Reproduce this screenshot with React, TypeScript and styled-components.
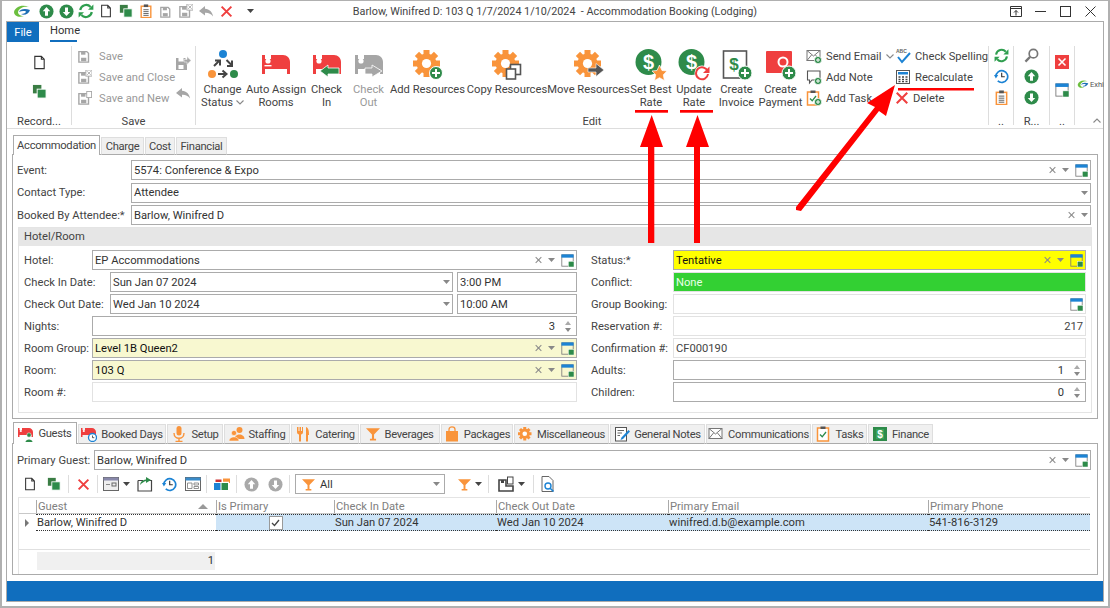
import React from 'react';
import styled, {createGlobalStyle} from 'styled-components';

const Global = createGlobalStyle`
    html, body { margin: 0; padding: 0; background: #fff; }
    body {
        font-family: Roboto, "Noto Sans", sans-serif;
        font-size: 11.2px;
        color: #444;
        overflow: hidden;
    }
    * { box-sizing: border-box; }
`;

const GREEN = '#2e8b4a';
const ORANGE = '#f9943b';
const RED = '#ef3f3f';
const BLUE = '#1c83d4';
const GRAY = '#a6a6a6';

/* ---------- icons ---------- */

type IconProps = {size?: number; color?: string};

const Svg: React.FC<{size?: number; box?: number; children: React.ReactNode}> = ({size = 16, box = 16, children}) => (
    <svg width={size} height={size} viewBox={`0 0 ${box} ${box}`} style={{display: 'block', flex: 'none'}}>{children}</svg>
);

const CircleArrow: React.FC<IconProps & {down?: boolean}> = ({size = 15, color = GREEN, down}) => (
    <Svg size={size}>
        <circle cx="8" cy="8" r="7.5" fill={color} />
        <g transform={down ? 'rotate(180 8 8)' : undefined}>
            <path d="M8 3.2 L12 7.6 H9.6 V12.4 H6.4 V7.6 H4 Z" fill="#fff" />
        </g>
    </Svg>
);

const Refresh: React.FC<IconProps> = ({size = 16, color = '#2f9e4f'}) => (
    <Svg size={size}>
        <path d="M2.2 7 A6 6 0 0 1 12.6 4" fill="none" stroke={color} strokeWidth="2.2" />
        <path d="M15.4 1.4 V6.8 H10 Z" fill={color} />
        <path d="M13.8 9 A6 6 0 0 1 3.4 12" fill="none" stroke={color} strokeWidth="2.2" />
        <path d="M.6 14.6 V9.2 H6 Z" fill={color} />
    </Svg>
);

const NewDoc: React.FC<IconProps> = ({size = 14}) => (
    <Svg size={size}>
        <path d="M3 1.5 H10 L13 4.5 V14.5 H3 Z M10 1.5 V4.5 H13" fill="#fff" stroke="#333" strokeWidth="1.2" />
    </Svg>
);

const CopyGreen: React.FC<IconProps> = ({size = 14}) => (
    <Svg size={size}>
        <rect x="1" y="1" width="9" height="9" fill="#3a7d44" />
        <rect x="5.5" y="5.5" width="9.5" height="9.5" fill={GREEN} stroke="#fff" strokeWidth="1" />
    </Svg>
);

const Clipboard: React.FC<IconProps> = ({size = 16, color = ORANGE}) => (
    <Svg size={size}>
        <rect x="2.5" y="2.5" width="11" height="13" fill="#fff" stroke={color} strokeWidth="1.6" />
        <rect x="5.5" y=".5" width="5" height="3" fill="#555" />
        <path d="M5 6.5 H11 M5 8.7 H11 M5 10.9 H11 M5 13 H11" stroke="#555" strokeWidth="1" />
    </Svg>
);

const Save: React.FC<IconProps & {extra?: 'x' | 'new'}> = ({size = 14, color = GRAY, extra}) => (
    <Svg size={size}>
        <path d="M1 3 H10 L12 5 V15 H1 Z" fill="none" stroke={color} strokeWidth="1.6" />
        <rect x="3.5" y="3" width="5" height="3.5" fill={color} />
        <rect x="3.5" y="10" width="6" height="4" fill={color} />
        {extra === 'x' && <g><rect x="9" y="0" width="7" height="7" fill="#fff" stroke={color} /><path d="M10.5 1.5 L14.5 5.5 M14.5 1.5 L10.5 5.5" stroke={color} /></g>}
        {extra === 'new' && <rect x="10" y=".5" width="5.5" height="7" fill="#fff" stroke={color} />}
    </Svg>
);

const SaveArrow = () => (
    <Svg>
        <path d="M1 3 H10 L12 5 V15 H1 Z" fill={GRAY} />
        <rect x="3.5" y="3" width="5" height="3.5" fill="#fff" />
        <rect x="3.5" y="10" width="5" height="4" fill="#fff" />
        <path d="M9 4.5 H12 V1.5 L16 5.5 L12 9.5 V7 H9 Z" fill={GRAY} stroke="#fff" strokeWidth=".5" />
    </Svg>
);

const Undo: React.FC<IconProps> = ({size = 16, color = GRAY}) => (
    <Svg size={size}>
        <path d="M7 3 L1 8 L7 12.5 V9.8 C10.5 9.6 13 10.8 15 13.5 C14.5 9 11.5 6.2 7 5.8 Z" fill={color} />
    </Svg>
);

const XMark: React.FC<IconProps> = ({size = 14, color = RED}) => (
    <Svg size={size}>
        <path d="M2 2 L14 14 M14 2 L2 14" stroke={color} strokeWidth="2.4" />
    </Svg>
);

const Bed: React.FC<IconProps> = ({size = 30, color = RED}) => (
    <Svg size={size} box={30}>
        <path d="M1 5 H4 V9 H10 V5 H22 C26 5 29 8 29 12 V24 H26 V19 H4 V24 H1 Z" fill={color} />
        <circle cx="7" cy="11" r="2.6" fill="#fff" />
        <rect x="3.5" y="15" width="7" height="1.4" fill="#fff" />
    </Svg>
);

const BedArrow: React.FC<{color: string; arrow: string; left?: boolean}> = ({color, arrow, left}) => (
    <Svg size={30} box={30}>
        <path d="M1 5 H4 V9 H10 V5 H22 C26 5 29 8 29 12 V24 H26 V19 H4 V24 H1 Z" fill={color} />
        <circle cx="7" cy="11" r="2.6" fill="#fff" />
        <path d={left ? 'M16 15 L8 21 L16 27 V24 H27 V18 H16 Z' : 'M18 15 L28 21 L18 27 V24 H11 V18 H18 Z'} fill={arrow} stroke="#fff" strokeWidth=".8" />
    </Svg>
);

const Gear: React.FC<{size?: number; children?: React.ReactNode}> = ({size = 30, children}) => (
    <Svg size={size} box={30}>
        <g transform="translate(13.5 13.5)">
            {[0, 45, 90, 135, 180, 225, 270, 315].map(a => (
                <rect key={a} x="-3" y="-13.5" width="6" height="6" fill={ORANGE} transform={`rotate(${a})`} />
            ))}
            <circle r="10" fill={ORANGE} />
            <circle r="4.6" fill="#fff" />
        </g>
        {children}
    </Svg>
);

const ChangeStatus = () => (
    <Svg size={32} box={32}>
        <circle cx="16" cy="5" r="4" fill={BLUE} />
        <circle cx="5" cy="25" r="4" fill={ORANGE} />
        <circle cx="27" cy="25" r="4" fill={GREEN} />
        <path d="M7 17 L12.5 11.5 M8 11.5 H13 V16.5" fill="none" stroke="#444" strokeWidth="2" />
        <path d="M19.5 11 L25 16.5 M25 11.5 V17 H20" fill="none" stroke="#444" strokeWidth="2" />
        <path d="M11 25 H18 M15.5 21.5 L19.5 25 L15.5 28.5" fill="none" stroke="#444" strokeWidth="2" />
    </Svg>
);

const Dollar: React.FC<{children?: React.ReactNode}> = ({children}) => (
    <Svg size={32} box={32}>
        <circle cx="13.5" cy="13" r="13" fill={GREEN} />
        <text x="13.5" y="20" textAnchor="middle" fontSize="20" fontWeight="700" fill="#fff" fontFamily="Liberation Sans">$</text>
        {children}
    </Svg>
);

const Invoice = () => (
    <Svg size={32} box={32}>
        <rect x="2.5" y="2" width="23" height="27" fill="#fff" stroke="#555" strokeWidth="1.6" />
        <text x="13" y="21" textAnchor="middle" fontSize="17" fontWeight="700" fill={GREEN} fontFamily="Liberation Sans">$</text>
        <circle cx="24" cy="24" r="7" fill={GREEN} stroke="#fff" />
        <path d="M24 20 V28 M20 24 H28" stroke="#fff" strokeWidth="2" />
    </Svg>
);

const Payment = () => (
    <Svg size={32} box={32}>
        <rect x="1" y="2" width="26" height="22" rx="1" fill={RED} />
        <circle cx="18" cy="13" r="4.5" fill="none" stroke="#fff" strokeWidth="2" />
        <circle cx="24" cy="24" r="7" fill={GREEN} stroke="#fff" />
        <path d="M24 20 V28 M20 24 H28" stroke="#fff" strokeWidth="2" />
    </Svg>
);

const PlusBadge = ({x = 12, y = 12}: {x?: number; y?: number}) => (
    <g>
        <circle cx={x} cy={y} r="3.6" fill={GREEN} stroke="#fff" strokeWidth=".7" />
        <path d={`M${x} ${y - 2} V${y + 2} M${x - 2} ${y} H${x + 2}`} stroke="#fff" strokeWidth="1" />
    </g>
);

const Mail: React.FC<{plus?: boolean; size?: number}> = ({plus, size = 16}) => (
    <Svg size={size}>
        <rect x="1" y="2.5" width="13" height="10" fill="#fff" stroke="#777" />
        <path d="M1 2.5 L7.5 8 L14 2.5 M1 12.5 L5.5 7 M14 12.5 L9.5 7" fill="none" stroke="#777" />
        {plus && <PlusBadge />}
    </Svg>
);

const Note = () => (
    <Svg>
        <path d="M1.5 2 H14 V11 H6 L3.5 14 V11 H1.5 Z" fill="#fff" stroke="#555" strokeWidth="1.1" />
        <PlusBadge />
    </Svg>
);

const TaskIcon: React.FC<{plus?: boolean; size?: number}> = ({plus, size = 16}) => (
    <Svg size={size}>
        <rect x="1.5" y="2" width="11" height="13" fill="#fff" stroke={ORANGE} strokeWidth="1.5" />
        <rect x="4.5" y=".5" width="5" height="2.5" fill="#555" />
        <path d="M4 8.5 L6.2 10.8 L10 6" fill="none" stroke={GREEN} strokeWidth="1.3" />
        {plus && <PlusBadge />}
    </Svg>
);

const Spell = () => (
    <Svg>
        <text x="1" y="5" fontSize="5" fontWeight="700" fill="#666" fontFamily="Liberation Sans">ABC</text>
        <path d="M3 9 L7 14 L15 5" fill="none" stroke={BLUE} strokeWidth="2" />
    </Svg>
);

const Calc = () => (
    <Svg>
        <rect x="1.5" y="1.5" width="13" height="13" fill="#fff" stroke="#555" />
        <rect x="3" y="3" width="10" height="2.5" fill={BLUE} />
        <path d="M3.5 8 H5.5 M7 8 H9 M10.5 8 H12.5 M3.5 10.5 H5.5 M7 10.5 H9 M10.5 10.5 H12.5 M3.5 12.7 H5.5 M7 12.7 H9 M10.5 12.7 H12.5" stroke="#444" strokeWidth="1.3" />
    </Svg>
);

const History: React.FC<IconProps> = ({size = 15}) => (
    <Svg size={size}>
        <path d="M2 8 A6.3 6.3 0 1 1 4 12.7" fill="none" stroke={BLUE} strokeWidth="1.8" />
        <path d="M0 6.5 H4.5 L2 10 Z" fill={BLUE} />
        <path d="M8.2 4 V8.3 H11.5" fill="none" stroke="#333" strokeWidth="1.2" />
    </Svg>
);

const Search: React.FC<IconProps> = ({size = 15}) => (
    <Svg size={size}>
        <circle cx="10" cy="6" r="4.5" fill="#fff" stroke="#777" strokeWidth="1.8" />
        <path d="M6.5 9.5 L1.5 14.5" stroke="#777" strokeWidth="2.4" />
    </Svg>
);

const RedBoxX = () => (
    <Svg size={14}>
        <rect width="16" height="16" fill={RED} />
        <path d="M4 4 L12 12 M12 4 L4 12" stroke="#fff" strokeWidth="1.8" />
    </Svg>
);

const Lookup: React.FC<{size?: number}> = ({size = 13}) => (
    <Svg size={size}>
        <rect x="1" y="1" width="14" height="14" fill="none" stroke="#777" strokeWidth="1" />
        <rect x=".5" y=".5" width="15" height="4" fill={BLUE} />
        <rect x="9" y="9" width="7" height="7" fill={GREEN} stroke="#fff" strokeWidth=".6" />
    </Svg>
);

const Logo: React.FC<{w?: number}> = ({w = 18}) => (
    <svg width={w} height={w * .72} viewBox="0 0 18 13" style={{display: 'block', flex: 'none'}}>
        <path d="M1 7 C2 2 9 -1 16 2 C11 1 6 3 5 7 C5 9 7 11 11 11 C6 13 1 11 1 7 Z" fill="#6cbf3f" />
        <path d="M6 7 C7 4 12 3 17 5 C16 9 11 11 8 9 C11 9 13 8 13 6.5 C11 5.8 8 6 6 7 Z" fill="#1c6fb5" />
    </svg>
);

const Caret: React.FC<{color?: string}> = ({color = '#444'}) => (
    <svg width="7" height="4" viewBox="0 0 7 4" style={{display: 'block', flex: 'none'}}><path d="M0 0 H7 L3.5 4 Z" fill={color} /></svg>
);

const Chevron: React.FC<{up?: boolean}> = ({up}) => (
    <svg width="8" height="5" viewBox="0 0 8 5" style={{display: 'block', flex: 'none'}}>
        <path d={up ? 'M.5 4.5 L4 1 L7.5 4.5' : 'M.5 .5 L4 4 L7.5 .5'} fill="none" stroke="#888" strokeWidth="1.1" />
    </svg>
);

/* small tab and toolbar drawings */
const BedSmall: React.FC<{badge: 'person' | 'clock'}> = ({badge}) => (
    <Svg>
        <path d="M0 2 H1.5 V4 H4 V2 H11 C13 2 15 4 15 6 V11 H13.5 V9 H1.5 V11 H0 Z" fill={RED} />
        <circle cx="2.8" cy="5" r="1.1" fill="#fff" />
        {badge === 'person'
            ? <g><circle cx="11" cy="9" r="2.2" fill={GREEN} stroke="#fff" strokeWidth=".5" /><path d="M7.5 16 C7.5 12.5 14.5 12.5 14.5 16 Z" fill={GREEN} /></g>
            : <g><circle cx="11.5" cy="11.5" r="4" fill="#fff" stroke={BLUE} strokeWidth="1.3" /><path d="M11.5 9.5 V11.7 H13.3" fill="none" stroke="#333" strokeWidth=".8" /></g>}
    </Svg>
);
const Mic = () => (
    <Svg><rect x="5.5" y="0" width="5" height="9.5" rx="2.5" fill={ORANGE} /><path d="M3 7 C3 14 13 14 13 7 M8 12 V15 M4.5 15.5 H11.5" fill="none" stroke={ORANGE} strokeWidth="1.4" /></Svg>
);
const People = () => (
    <Svg>
        <circle cx="10.5" cy="4" r="3" fill={ORANGE} /><path d="M5.5 13 C5.5 7 15.5 7 15.5 13 Z" fill={ORANGE} />
        <circle cx="5" cy="7" r="2.6" fill={ORANGE} stroke="#fff" strokeWidth=".5" /><path d="M0 15 C0 9.5 10 9.5 10 15 Z" fill={ORANGE} stroke="#fff" strokeWidth=".5" />
    </Svg>
);
const Cutlery = () => (
    <Svg><path d="M2 1 V6 C2 8 3 8 4 8.5 V15.5 H6 V8.5 C7 8 8 8 8 6 V1 H7 V5 H6 V1 H4.5 V5 H3.5 V1 Z M11 1 C14 2 14 6 14 9 H13 V15.5 H11 Z" fill={ORANGE} /></Svg>
);
const Martini: React.FC<{size?: number}> = ({size = 14}) => (
    <Svg size={size}><path d="M0 1.5 H16 L9.2 8.5 V13.5 H11.5 V15.5 H4.5 V13.5 H6.8 V8.5 Z" fill={ORANGE} /></Svg>
);
const Bag = () => (
    <Svg><path d="M2 5 H14 V15.5 H2 Z" fill={ORANGE} /><path d="M5 6 V3.5 C5 0 11 0 11 3.5 V6" fill="none" stroke={ORANGE} strokeWidth="1.3" /></Svg>
);
const GenNotes = () => (
    <Svg><rect x="1.5" y="1.5" width="11" height="13.5" fill="#fff" stroke="#555" /><path d="M3.5 4.5 H10 M3.5 7 H8 M3.5 9.5 H6" stroke="#666" /><path d="M14.5 4 L7.5 11.5 L6.5 14 L9 13 L16 5.5 Z" fill={BLUE} /></Svg>
);
const Money = () => (
    <Svg><rect x="1" y="1" width="14" height="14" fill={GREEN} /><rect x="4" y="3" width="8" height="10" fill="#3aa35c" /><text x="8" y="12" textAnchor="middle" fontSize="10" fontWeight="700" fill="#fff" fontFamily="Liberation Sans">$</text></Svg>
);
const ViewIcon = () => (
    <Svg><rect x=".5" y="1.5" width="15" height="13" fill="#eee" stroke="#666" /><rect x=".5" y="1.5" width="15" height="3" fill="#88a" /><rect x="9" y="7" width="4" height="3" fill="none" stroke="#666" /><path d="M3 8.5 H7" stroke="#888" /></Svg>
);
const FolderOut = () => (
    <Svg><path d="M1 4.5 H6 M10 4.5 H14.5 V15 H1 V4.5" fill="none" stroke="#444" strokeWidth="1.2" /><path d="M3 9 C3.5 6 5 4 9 3.5 V1 L14 4 L9 7 V5 C7 5.4 5 7 3 9 Z" fill={GREEN} /></Svg>
);
const CardIcon = () => (
    <Svg><rect x=".5" y="1.5" width="15" height="13" fill="#fff" stroke="#666" /><rect x=".5" y="1.5" width="15" height="3" fill="#3a8bc9" /><path d="M2.5 7 H7 V12.5 H2.5 Z M9 7 H13.5 V9 H9 Z M9 10.5 H13.5 V12.5 H9 Z" fill="none" stroke="#777" strokeWidth=".8" /></Svg>
);
const ColorBoxes = () => (
    <Svg><rect x="0" y="7" width="6.5" height="7" fill={BLUE} /><rect x="7.5" y="7" width="6.5" height="7" fill={GREEN} /><path d="M1.5 6 V3.5 H7.5 V6 Z" fill="#c33" /><path d="M9 5.8 V2.5 H16 V7 H15 V5.8 Z" fill={ORANGE} /></Svg>
);
const Layout = () => (
    <Svg><path d="M1 4 H8 V10 H15 V15 H1 Z" fill="none" stroke="#444" strokeWidth="1.6" /><rect x="3" y="4" width="3" height="3" fill="#444" /><rect x="9.5" y="1" width="5.5" height="7" fill="#fff" stroke="#444" /></Svg>
);
const DocSearch = () => (
    <Svg><path d="M2 .5 H9 L13 4.5 V15.5 H2 Z" fill="#fff" stroke="#666" /><circle cx="8" cy="10" r="3" fill="none" stroke={BLUE} strokeWidth="1.4" /><path d="M10.2 12.2 L13.5 15.5" stroke={BLUE} strokeWidth="1.6" /></Svg>
);

/* ---------- window chrome ---------- */

const Window = styled.div`
    width: 1110px;
    height: 608px;
    border: 2px solid #b0b0b0;
    border-top-width: 1px;
    padding: 0 4px 4px 4px;
    display: flex;
    flex-direction: column;
`;

const TitleBar = styled.div`
    height: 20px;
    display: grid;
    grid-template-columns: 1fr auto 1fr;
    align-items: center;
    margin: 0 -4px;
    font-size: 10.8px;
`;

const Quick = styled.div`
    display: flex;
    align-items: center;
    padding-left: 10px;
`;

const QuickSlot = styled.div<{$w: number; $ml?: number}>`
    width: ${p => p.$w}px;
    margin-left: ${p => p.$ml || 0}px;
    display: flex;
    justify-content: center;
`;

const WinButtons = styled.div`
    display: flex;
    justify-content: flex-end;
    align-items: center;
    gap: 14px;
    padding-right: 12px;
`;

const WinBtn = styled.div`
    width: 11px;
    height: 11px;
`;

const Frame = styled.div`
    flex: 1;
    border: 1px solid #ababab;
    display: flex;
    flex-direction: column;
    min-height: 0;
`;

const MenuRow = styled.div`
    height: 20px;
    display: flex;
    flex: none;
`;

const FileTab = styled.div`
    width: 32px;
    background: #106ebe;
    color: #fff;
    display: flex;
    align-items: center;
    justify-content: center;
`;

const HomeTab = styled.div`
    margin-left: 11px;
    width: 27px;
    border-bottom: 2px solid #106ebe;
    color: #333;
    line-height: 17px;
    text-align: center;
    white-space: nowrap;
`;

/* ---------- ribbon ---------- */

const Ribbon = styled.div`
    height: 87px;
    flex: none;
    display: flex;
    border-bottom: 1px solid #ddd;
    position: relative;
`;

const RibbonGroup = styled.div<{$w: number}>`
    width: ${p => p.$w}px;
    flex: none;
    margin-top: 4px;
    height: 79px;
    border-right: 1px solid #ddd;
    display: flex;
    flex-direction: column;
`;

const GroupBody = styled.div`
    height: 69px;
    flex: none;
    display: flex;
`;

const GroupLabel = styled.div`
    height: 13px;
    flex: none;
    text-align: center;
    line-height: 13px;
    color: #444;
    white-space: nowrap;
`;

const IconStack = styled.div<{$w?: number; $wide?: boolean}>`
    ${p => p.$w ? `width: ${p.$w}px;` : 'flex: 1;'}
    display: flex;
    flex-direction: column;
    align-items: center;
    gap: ${p => p.$wide ? 14 : 6}px;
    padding-top: ${p => p.$wide ? 9 : 2}px;
`;

const SmallColumn = styled.div<{$w: number; $pl?: number}>`
    width: ${p => p.$w}px;
    padding-left: ${p => p.$pl || 0}px;
    flex: none;
    display: flex;
    flex-direction: column;
    gap: 5px;
    padding-top: 2px;
`;

const SmallItem = styled.div<{$off?: boolean}>`
    height: 16px;
    display: flex;
    align-items: center;
    gap: 4px;
    white-space: nowrap;
    color: ${p => p.$off ? '#999' : '#444'};
`;

const SmallLabel = styled.span`
    margin-left: 3px;
`;

const LargeItem = styled.div<{$w: number; $off?: boolean}>`
    width: ${p => p.$w}px;
    flex: none;
    display: flex;
    flex-direction: column;
    align-items: center;
    color: ${p => p.$off ? '#999' : '#444'};
    text-align: center;
    line-height: 13px;
    white-space: nowrap;
`;

const LargeIcon = styled.div`
    height: 37px;
    display: flex;
    align-items: center;
    justify-content: center;
    flex: none;
`;

const MenuLine = styled.span`
    display: flex;
    align-items: center;
    gap: 3px;
`;

const ExhibitLogo = styled.div`
    flex: 1;
    display: flex;
    align-items: flex-start;
    gap: 1px;
    padding: 38px 0 0 2px;
    font-size: 7.5px;
    color: #555;
    position: relative;
    white-space: nowrap;
`;

const CollapseBtn = styled.div`
    position: absolute;
    right: 3px;
    bottom: 5px;
`;

/* ---------- content and tabs ---------- */

const Content = styled.div`
    flex: 1;
    display: flex;
    flex-direction: column;
    padding: 6px 5px 6px;
    min-height: 0;
`;

const TabStrip = styled.div<{$lower?: boolean}>`
    display: flex;
    align-items: flex-end;
    height: ${p => p.$lower ? 22 : 20}px;
    margin-top: ${p => p.$lower ? 3 : 0}px;
    flex: none;
    position: relative;
    z-index: 1;
    margin-bottom: -1px;
    gap: 1px;
`;

const Tab = styled.div<{$w: number; $active?: boolean; $h: number}>`
    width: ${p => p.$w}px;
    height: ${p => p.$active ? p.$h : p.$h - 2}px;
    flex: none;
    display: flex;
    align-items: center;
    justify-content: center;
    gap: 4px;
    white-space: nowrap;
    letter-spacing: -0.3px;
    background: ${p => p.$active ? '#fff' : '#f0f0f0'};
    border: 1px solid ${p => p.$active ? '#ababab' : '#dedede'};
    border-bottom: ${p => p.$active ? 'none' : '1px solid #ababab'};
    color: #444;
    margin-left: ${p => p.$active ? 1 : 0}px;
`;

const Panel = styled.div<{$grow?: boolean}>`
    border: 1px solid #ababab;
    padding: ${p => p.$grow ? '6px 6px 0 4px' : '5px 6px 5px 4px'};
    display: flex;
    flex-direction: column;
    ${p => p.$grow ? 'flex: 1; min-height: 0;' : ''}
`;

const Rows = styled.div<{$gap: number}>`
    display: flex;
    flex-direction: column;
    gap: ${p => p.$gap}px;
`;

const FormRow = styled.div`
    display: flex;
    align-items: center;
    height: 20px;
    flex: none;
`;

const FieldLabel = styled.div<{$w: number}>`
    width: ${p => p.$w}px;
    flex: none;
    white-space: nowrap;
    color: #444;
`;

type Tone = 'plain' | 'cream' | 'yellow' | 'green' | 'readonly';

const toneBg: Record<Tone, string> = {plain: '#fff', cream: '#f8f8d0', yellow: '#ffff00', green: '#33d033', readonly: '#fff'};
const toneText: Record<Tone, string> = {plain: '#333', cream: '#111', yellow: '#111', green: '#e8ffe8', readonly: '#444'};

const FieldBox = styled.div<{$tone?: Tone; $w?: number}>`
    ${p => p.$w ? `width: ${p.$w}px; flex: none;` : 'flex: 1; min-width: 0;'}
    height: 20px;
    display: flex;
    align-items: center;
    padding: 0 2px;
    gap: 6px;
    background: ${p => toneBg[p.$tone || 'plain']};
    color: ${p => toneText[p.$tone || 'plain']};
    border: 1px solid ${p => (p.$tone === 'readonly' || p.$tone === 'green') ? '#e2e2e2' : '#ababab'};
`;

const FieldText = styled.div<{$right?: boolean}>`
    flex: 1;
    min-width: 0;
    white-space: nowrap;
    text-align: ${p => p.$right ? 'right' : 'left'};
`;

const ClearMark = styled.span`
    width: 8px;
    height: 8px;
    flex: none;
    display: block;
    position: relative;
    &::before, &::after {
        content: '';
        position: absolute;
        left: 3.5px;
        top: 0;
        width: 1px;
        height: 8px;
        background: #888;
    }
    &::before { transform: rotate(45deg); }
    &::after { transform: rotate(-45deg); }
`;

const SpinBox = styled.div`
    width: 9px;
    flex: none;
    display: flex;
    flex-direction: column;
    align-items: center;
    gap: 3px;
    margin: 0 2px;
`;

const SpinUp = styled.span`
    border-left: 3px solid transparent;
    border-right: 3px solid transparent;
    border-bottom: 4px solid #aaa;
`;

const SpinDown = styled(SpinUp)`
    border-bottom: none;
    border-top: 4px solid #888;
`;

type FieldProps = {
    value?: string;
    tone?: Tone;
    w?: number;
    right?: boolean;
    clear?: boolean;
    drop?: boolean;
    lookup?: boolean;
    spin?: boolean;
};

const Field: React.FC<FieldProps> = ({value, tone, w, right, clear, drop, lookup, spin}) => (
    <FieldBox $tone={tone} $w={w}>
        <FieldText $right={right}>{value}</FieldText>
        {clear && <ClearMark />}
        {drop && <Caret color="#888" />}
        {lookup && <Lookup />}
        {spin && <SpinBox><SpinUp /><SpinDown /></SpinBox>}
    </FieldBox>
);

const DateGap = styled.div`
    width: 4px;
    flex: none;
`;

const RoomGroup = styled.div`
    margin: 2px -1px 0 1px;
    border: 1px solid #e4e4e4;
    flex: none;
`;

const RoomHeader = styled.div`
    height: 18px;
    background: #e6e6e6;
    padding-left: 5px;
    line-height: 17px;
`;

const RoomBody = styled.div`
    display: grid;
    grid-template-columns: 553px 1fr;
    gap: 14px;
    padding: 4px 5px 10px;
`;

/* ---------- guest grid ---------- */

const GuestToolbar = styled.div`
    height: 20px;
    margin: 4px 0 3px 1px;
    display: flex;
    align-items: center;
    flex: none;
`;

const ToolBtn = styled.div<{$w: number; $ml?: number}>`
    width: ${p => p.$w}px;
    margin-left: ${p => p.$ml || 0}px;
    flex: none;
    display: flex;
    align-items: center;
    justify-content: center;
    gap: 4px;
`;

const ToolSep = styled.div`
    width: 1px;
    height: 18px;
    margin: 0 2px;
    background: #ddd;
    flex: none;
`;

const FilterCombo = styled.div`
    width: 150px;
    height: 20px;
    margin-left: 3px;
    border: 1px solid #ababab;
    flex: none;
    display: flex;
    align-items: center;
    gap: 5px;
    padding: 0 4px 0 6px;
    color: #333;
`;

const GridWrap = styled.div`
    margin: 0 1px 0 1px;
    border-top: 1px solid #e4e4e4;
    border-left: 1px solid #e4e4e4;
    flex: 1;
    display: flex;
    flex-direction: column;
    min-height: 0;
`;

const cols = '17px 180px 118px 162px 172px 260px 1fr';

const GridHead = styled.div`
    display: grid;
    grid-template-columns: ${cols};
    height: 16px;
    flex: none;
    border-bottom: 1px solid #c8c8c8;
`;

const HeadCell = styled.div`
    border-left: 1px solid #aaa;
    margin: 2px 0 0;
    padding-left: 1px;
    color: #808080;
    line-height: 13px;
    display: flex;
    align-items: center;
    justify-content: space-between;
    white-space: nowrap;
    &:first-child { border-left: none; }
`;

const SortMark = styled.span`
    border-left: 5px solid transparent;
    border-right: 5px solid transparent;
    border-bottom: 5px solid #999;
    margin-right: 8px;
`;

const GridRow = styled.div`
    display: grid;
    grid-template-columns: ${cols};
    height: 17px;
    flex: none;
`;

const RowMark = styled.div`
    display: flex;
    align-items: center;
    padding-left: 6px;
    &::before {
        content: '';
        border-top: 4px solid transparent;
        border-bottom: 4px solid transparent;
        border-left: 4px solid #777;
    }
`;

const Cell = styled.div<{$sel?: boolean; $center?: boolean}>`
    background: ${p => p.$sel ? '#cde4f7' : '#fff'};
    border-top: 1px dotted #333;
    border-bottom: 1px dotted #333;
    padding-left: 1px;
    display: flex;
    align-items: center;
    white-space: nowrap;
    justify-content: ${p => p.$center ? 'center' : 'flex-start'};
    color: #333;
`;

const CheckBox = styled.div`
    width: 14px;
    height: 14px;
    border: 1px solid #999;
    background: #fff;
    display: flex;
    align-items: center;
    justify-content: center;
`;

const GridSpace = styled.div`
    flex: 1;
`;

const GridFooter = styled.div`
    height: 25px;
    flex: none;
    border-top: 1px solid #e0e0e0;
    padding: 2px 0 4px 18px;
    display: flex;
`;

const SummaryCell = styled.div`
    width: 178px;
    background: #f0f0f0;
    text-align: right;
    padding-right: 1px;
    line-height: 17px;
    color: #333;
`;

const StatusBar = styled.div`
    height: 20px;
    flex: none;
    background: #106ebe;
`;

/* arrows drawn by hand on the screenshot, they sit over everything */
const Annotations = styled.svg`
    position: absolute;
    left: 0;
    top: 0;
    pointer-events: none;
`;

const smallSave = [
    {label: 'Save', icon: <Save />},
    {label: 'Save and Close', icon: <Save extra="x" />},
    {label: 'Save and New', icon: <Save extra="new" />},
];

const guestTabs: {label: string; w: number; icon: React.ReactNode; active?: boolean}[] = [
    {label: 'Guests', w: 64, icon: <BedSmall badge="person" />, active: true},
    {label: 'Booked Days', w: 88, icon: <BedSmall badge="clock" />},
    {label: 'Setup', w: 56, icon: <Mic />},
    {label: 'Staffing', w: 66, icon: <People />},
    {label: 'Catering', w: 68, icon: <Cutlery />},
    {label: 'Beverages', w: 80, icon: <Martini />},
    {label: 'Packages', w: 72, icon: <Bag />},
    {label: 'Miscellaneous', w: 95, icon: <Gear size={15} />},
    {label: 'General Notes', w: 95, icon: <GenNotes />},
    {label: 'Communications', w: 105, icon: <Mail />},
    {label: 'Tasks', w: 55, icon: <TaskIcon />},
    {label: 'Finance', w: 65, icon: <Money />},
];

const App: React.FC = () => (
    <Window>
        <Global />
        <TitleBar>
            <Quick>
                <QuickSlot $w={20}><Logo /></QuickSlot>
                <QuickSlot $w={20} $ml={4}><CircleArrow /></QuickSlot>
                <QuickSlot $w={20}><CircleArrow down /></QuickSlot>
                <QuickSlot $w={20}><Refresh /></QuickSlot>
                <QuickSlot $w={20}><NewDoc /></QuickSlot>
                <QuickSlot $w={20}><CopyGreen /></QuickSlot>
                <QuickSlot $w={20}><Clipboard size={14} /></QuickSlot>
                <QuickSlot $w={20}><Save size={13} /></QuickSlot>
                <QuickSlot $w={20}><Save size={14} extra="x" /></QuickSlot>
                <QuickSlot $w={20}><Undo /></QuickSlot>
                <QuickSlot $w={20}><XMark size={13} /></QuickSlot>
                <QuickSlot $w={28}><Caret /></QuickSlot>
            </Quick>
            <div>Barlow, Winifred D: 103 Q 1/7/2024 1/10/2024&nbsp; - Accommodation Booking (Lodging)</div>
            <WinButtons>
                <WinBtn>
                    <svg width="12" height="11" viewBox="0 0 12 11"><path d="M.5 .5 H11.5 V10.5 H.5 Z M.5 2.5 H11.5" fill="none" stroke="#333" /><path d="M6 9.5 V4.5 M4 6.5 L6 4.5 L8 6.5" fill="none" stroke="#333" /></svg>
                </WinBtn>
                <WinBtn>
                    <svg width="11" height="11" viewBox="0 0 11 11"><path d="M0 5.5 H11" stroke="#333" /></svg>
                </WinBtn>
                <WinBtn>
                    <svg width="11" height="11" viewBox="0 0 11 11"><rect x=".5" y=".5" width="10" height="10" fill="none" stroke="#333" /></svg>
                </WinBtn>
                <WinBtn>
                    <svg width="11" height="11" viewBox="0 0 11 11"><path d="M.5 .5 L10.5 10.5 M10.5 .5 L.5 10.5" stroke="#333" /></svg>
                </WinBtn>
            </WinButtons>
        </TitleBar>
        <Frame>
            <MenuRow>
                <FileTab>File</FileTab>
                <HomeTab>Home</HomeTab>
            </MenuRow>
            <Ribbon>
                <RibbonGroup $w={65}>
                    <GroupBody>
                        <IconStack $wide>
                            <NewDoc size={15} />
                            <CopyGreen size={15} />
                        </IconStack>
                    </GroupBody>
                    <GroupLabel>Record...</GroupLabel>
                </RibbonGroup>
                <RibbonGroup $w={124}>
                    <GroupBody>
                        <SmallColumn $w={100} $pl={6}>
                            {smallSave.map(s => (
                                <SmallItem key={s.label} $off><span>{s.icon}</span><SmallLabel>{s.label}</SmallLabel></SmallItem>
                            ))}
                        </SmallColumn>
                        <IconStack $w={22} $wide>
                            <SaveArrow />
                            <Undo size={16} />
                        </IconStack>
                    </GroupBody>
                    <GroupLabel>Save</GroupLabel>
                </RibbonGroup>
                <RibbonGroup $w={793}>
                    <GroupBody>
                        <LargeItem $w={2} />
                        <LargeItem $w={49}>
                            <LargeIcon><ChangeStatus /></LargeIcon>
                            <span>Change</span>
                            <MenuLine>Status <Chevron /></MenuLine>
                        </LargeItem>
                        <LargeItem $w={58}>
                            <LargeIcon><Bed /></LargeIcon>
                            <span>Auto Assign</span><span>Rooms</span>
                        </LargeItem>
                        <LargeItem $w={43}>
                            <LargeIcon><BedArrow color={RED} arrow={GREEN} left /></LargeIcon>
                            <span>Check</span><span>In</span>
                        </LargeItem>
                        <LargeItem $w={41} $off>
                            <LargeIcon><BedArrow color={GRAY} arrow={GRAY} /></LargeIcon>
                            <span>Check</span><span>Out</span>
                        </LargeItem>
                        <LargeItem $w={77}>
                            <LargeIcon>
                                <Gear><circle cx="23" cy="23" r="6.5" fill={GREEN} stroke="#fff" /><path d="M23 19 V27 M19 23 H27" stroke="#fff" strokeWidth="2" /></Gear>
                            </LargeIcon>
                            <span>Add Resources</span>
                        </LargeItem>
                        <LargeItem $w={82}>
                            <LargeIcon>
                                <Gear><rect x="18.5" y="14.5" width="10" height="10" fill="#fff" stroke="#555" strokeWidth="1.6" /><rect x="14.5" y="19" width="9" height="10" fill="#fff" stroke="#555" strokeWidth="1.6" /></Gear>
                            </LargeIcon>
                            <span>Copy Resources</span>
                        </LargeItem>
                        <LargeItem $w={81}>
                            <LargeIcon>
                                <Gear><path d="M14 18 H22 V13.5 L30 20 L22 26.5 V22 H14 Z" fill="#555" stroke="#fff" strokeWidth=".6" /></Gear>
                            </LargeIcon>
                            <span>Move Resources</span>
                        </LargeItem>
                        <LargeItem $w={44}>
                            <LargeIcon>
                                <Dollar><path d="M24.5 16 L27 21.5 L32 22 L28.3 25.8 L29.4 31.5 L24.5 28.7 L19.6 31.5 L20.7 25.8 L17 22 L22 21.5 Z" fill={ORANGE} stroke="#fff" strokeWidth=".7" /></Dollar>
                            </LargeIcon>
                            <span>Set Best</span><span>Rate</span>
                        </LargeItem>
                        <LargeItem $w={42}>
                            <LargeIcon>
                                <Dollar><circle cx="24" cy="24" r="7.5" fill="#fff" /><path d="M29.6 22 A6 6 0 1 0 30 25" fill="none" stroke={RED} strokeWidth="2" /><path d="M31.5 17.5 V24 H25 Z" fill={RED} /></Dollar>
                            </LargeIcon>
                            <span>Update</span><span>Rate</span>
                        </LargeItem>
                        <LargeItem $w={43}>
                            <LargeIcon><Invoice /></LargeIcon>
                            <span>Create</span><span>Invoice</span>
                        </LargeItem>
                        <LargeItem $w={45}>
                            <LargeIcon><Payment /></LargeIcon>
                            <span>Create</span><span>Payment</span>
                        </LargeItem>
                        <SmallColumn $w={89} $pl={3}>
                            <SmallItem><Mail plus /><span>Send Email</span><Chevron /></SmallItem>
                            <SmallItem><Note /><span>Add Note</span></SmallItem>
                            <SmallItem><TaskIcon plus /><span>Add Task</span></SmallItem>
                        </SmallColumn>
                        <SmallColumn $w={95} $pl={3}>
                            <SmallItem><Spell /><span>Check Spelling</span></SmallItem>
                            <SmallItem><Calc /><span>Recalculate</span></SmallItem>
                            <SmallItem><XMark /><span>Delete</span></SmallItem>
                        </SmallColumn>
                    </GroupBody>
                    <GroupLabel>Edit</GroupLabel>
                </RibbonGroup>
                <RibbonGroup $w={25}>
                    <GroupBody>
                        <IconStack><Refresh size={15} /><History /><Clipboard size={15} /></IconStack>
                    </GroupBody>
                    <GroupLabel>..</GroupLabel>
                </RibbonGroup>
                <RibbonGroup $w={36}>
                    <GroupBody>
                        <IconStack><Search /><CircleArrow size={15} /><CircleArrow size={15} down /></IconStack>
                    </GroupBody>
                    <GroupLabel>R...</GroupLabel>
                </RibbonGroup>
                <RibbonGroup $w={25}>
                    <GroupBody>
                        <IconStack $wide><RedBoxX /><Lookup size={14} /></IconStack>
                    </GroupBody>
                    <GroupLabel>..</GroupLabel>
                </RibbonGroup>
                <ExhibitLogo>
                    <Logo w={12} /><span>Exhi</span>
                    <CollapseBtn><Chevron up /></CollapseBtn>
                </ExhibitLogo>
            </Ribbon>
            <Content>
                <TabStrip>
                    <Tab $h={20} $w={87} $active>Accommodation</Tab>
                    <Tab $h={20} $w={43}>Charge</Tab>
                    <Tab $h={20} $w={30}>Cost</Tab>
                    <Tab $h={20} $w={51}>Financial</Tab>
                </TabStrip>
                <Panel>
                    <Rows $gap={2.5}>
                        <FormRow><FieldLabel $w={114}>Event:</FieldLabel><Field value="5574: Conference & Expo" clear drop lookup /></FormRow>
                        <FormRow><FieldLabel $w={114}>Contact Type:</FieldLabel><Field value="Attendee" drop /></FormRow>
                        <FormRow><FieldLabel $w={114}>Booked By Attendee:*</FieldLabel><Field value="Barlow, Winifred D" clear drop /></FormRow>
                    </Rows>
                    <RoomGroup>
                        <RoomHeader>Hotel/Room</RoomHeader>
                        <RoomBody>
                            <Rows $gap={2}>
                                <FormRow><FieldLabel $w={68}>Hotel:</FieldLabel><Field value="EP Accommodations" clear drop lookup /></FormRow>
                                <FormRow><FieldLabel $w={86}>Check In Date:</FieldLabel><Field value="Sun Jan 07 2024" drop /><DateGap /><Field value="3:00 PM" w={120} /></FormRow>
                                <FormRow><FieldLabel $w={86}>Check Out Date:</FieldLabel><Field value="Wed Jan 10 2024" drop /><DateGap /><Field value="10:00 AM" w={120} /></FormRow>
                                <FormRow><FieldLabel $w={68}>Nights:</FieldLabel><Field value="3" right spin /></FormRow>
                                <FormRow><FieldLabel $w={68}>Room Group:</FieldLabel><Field value="Level 1B Queen2" tone="cream" clear drop lookup /></FormRow>
                                <FormRow><FieldLabel $w={68}>Room:</FieldLabel><Field value="103 Q" tone="cream" clear drop lookup /></FormRow>
                                <FormRow><FieldLabel $w={68}>Room #:</FieldLabel><Field tone="readonly" /></FormRow>
                            </Rows>
                            <Rows $gap={2}>
                                <FormRow><FieldLabel $w={82}>Status:*</FieldLabel><Field value="Tentative" tone="yellow" clear drop lookup /></FormRow>
                                <FormRow><FieldLabel $w={82}>Conflict:</FieldLabel><Field value="None" tone="green" /></FormRow>
                                <FormRow><FieldLabel $w={82}>Group Booking:</FieldLabel><Field tone="readonly" lookup /></FormRow>
                                <FormRow><FieldLabel $w={82}>Reservation #:</FieldLabel><Field value="217" tone="readonly" right /></FormRow>
                                <FormRow><FieldLabel $w={82}>Confirmation #:</FieldLabel><Field value="CF000190" tone="readonly" /></FormRow>
                                <FormRow><FieldLabel $w={82}>Adults:</FieldLabel><Field value="1" right spin /></FormRow>
                                <FormRow><FieldLabel $w={82}>Children:</FieldLabel><Field value="0" right spin /></FormRow>
                            </Rows>
                        </RoomBody>
                    </RoomGroup>
                </Panel>
                <TabStrip $lower>
                    {guestTabs.map(t => (
                        <Tab key={t.label} $h={22} $w={t.w} $active={t.active}>{t.icon}<span>{t.label}</span></Tab>
                    ))}
                </TabStrip>
                <Panel $grow>
                    <FormRow>
                        <FieldLabel $w={77}>Primary Guest:</FieldLabel>
                        <Field value="Barlow, Winifred D" clear drop lookup />
                    </FormRow>
                    <GuestToolbar>
                        <ToolBtn $w={24}><NewDoc size={14} /></ToolBtn>
                        <ToolBtn $w={24}><CopyGreen size={14} /></ToolBtn>
                        <ToolSep />
                        <ToolBtn $w={24}><XMark size={13} /></ToolBtn>
                        <ToolSep />
                        <ToolBtn $w={32}><ViewIcon /><Caret /></ToolBtn>
                        <ToolBtn $w={25}><FolderOut /></ToolBtn>
                        <ToolBtn $w={24}><History /></ToolBtn>
                        <ToolBtn $w={23}><CardIcon /></ToolBtn>
                        <ToolSep />
                        <ToolBtn $w={25}><ColorBoxes /></ToolBtn>
                        <ToolSep />
                        <ToolBtn $w={24}><CircleArrow color="#a9a9a9" /></ToolBtn>
                        <ToolBtn $w={24}><CircleArrow color="#a9a9a9" down /></ToolBtn>
                        <ToolSep />
                        <FilterCombo><Martini size={13} /><FieldText>All</FieldText><Caret color="#888" /></FilterCombo>
                        <ToolBtn $w={32} $ml={9}><Martini size={13} /><Caret /></ToolBtn>
                        <ToolSep />
                        <ToolBtn $w={40}><Layout /><Caret /></ToolBtn>
                        <ToolSep />
                        <ToolBtn $w={24}><DocSearch /></ToolBtn>
                    </GuestToolbar>
                    <GridWrap>
                        <GridHead>
                            <HeadCell />
                            <HeadCell>Guest<SortMark /></HeadCell>
                            <HeadCell>Is Primary</HeadCell>
                            <HeadCell>Check In Date</HeadCell>
                            <HeadCell>Check Out Date</HeadCell>
                            <HeadCell>Primary Email</HeadCell>
                            <HeadCell>Primary Phone</HeadCell>
                        </GridHead>
                        <GridRow>
                            <RowMark />
                            <Cell>Barlow, Winifred D</Cell>
                            <Cell $sel $center>
                                <CheckBox>
                                    <svg width="9" height="8" viewBox="0 0 9 8"><path d="M1 4 L3.5 6.5 L8 1" fill="none" stroke="#444" strokeWidth="1.3" /></svg>
                                </CheckBox>
                            </Cell>
                            <Cell $sel>Sun Jan 07 2024</Cell>
                            <Cell $sel>Wed Jan 10 2024</Cell>
                            <Cell $sel>winifred.d.b@example.com</Cell>
                            <Cell $sel>541-816-3129</Cell>
                        </GridRow>
                        <GridSpace />
                        <GridFooter><SummaryCell>1</SummaryCell></GridFooter>
                    </GridWrap>
                </Panel>
            </Content>
            <StatusBar />
        </Frame>
        <Annotations width="1110" height="608" viewBox="0 0 1110 608">
            <rect x="635" y="110" width="33" height="2.7" fill="#f00" />
            <rect x="680" y="110" width="33" height="2.7" fill="#f00" />
            <rect x="898" y="88" width="76" height="2.5" fill="#f00" />
            <path d="M648 243 V147 H640 L651.7 115 L663 147 H654.3 V243 Z" fill="#f00" />
            <path d="M694 243 V147 H686 L697.5 115 L709 147 H700 V243 Z" fill="#f00" />
            <path d="M895 85 L886 116 L879 111 L801 211 L796 210 L796 207 L875 107 L867 103 Z" fill="#f00" />
        </Annotations>
    </Window>
);

export default App;
